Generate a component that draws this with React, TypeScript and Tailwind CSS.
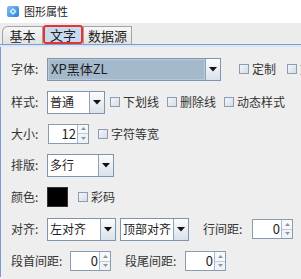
import React from "react"

const font = { fontFamily: '"Noto Sans CJK SC", "Noto Sans", sans-serif' }

function Arrow() {
  return (
    <div className="flex h-full w-[15px] shrink-0 items-center justify-center border-l border-[#8fa3b8] bg-gradient-to-b from-[#fbfcfd] to-[#d9e2eb]">
      <svg width="8" height="5" viewBox="0 0 8 5">
        <path d="M0 0H8L4 4.5Z" fill="#111" />
      </svg>
    </div>
  )
}

function Combo({ text, w, selected = false }: { text: string; w: string; selected?: boolean }) {
  return (
    <div className={`flex h-[23px] shrink-0 items-stretch border border-[#7f95ab] ${w}`}>
      <div
        className={`flex min-w-0 flex-1 items-center overflow-hidden whitespace-nowrap pl-[2px] text-[12px] text-[#1c1c1c] ${
          selected ? "bg-[#a5b9cd] border border-[#b9c9d8] text-[13px]" : "bg-white"
        }`}
      >
        {text}
      </div>
      <Arrow />
    </div>
  )
}

function Check({ label, cls = "" }: { label: string; cls?: string }) {
  return (
    <div className={`flex shrink-0 items-center ${cls}`}>
      <div className="h-[10px] w-[10px] border border-[#8b9db1] bg-gradient-to-br from-[#f4f6f9] to-[#d5dde6]" />
      <span className="ml-[3px] whitespace-nowrap text-[12px] text-[#333]">{label}</span>
    </div>
  )
}

function Spinner({ value, cls = "" }: { value: string; cls?: string }) {
  return (
    <div className={`flex h-[20px] w-[41px] shrink-0 border border-[#8a9cb0] bg-white ${cls}`}>
      <div className="flex flex-1 items-center justify-end pr-[1px] text-[13px] text-[#1c1c1c]">{value}</div>
      <div className="flex w-[11px] flex-col border-l border-[#a9b7c6]">
        <div className="flex flex-1 items-center justify-center border-b border-[#c3ccd6] bg-[#f6f8fa]">
          <svg width="5" height="3" viewBox="0 0 5 3">
            <path d="M0 3H5L2.5 0Z" fill="#8a96a3" />
          </svg>
        </div>
        <div className="flex flex-1 items-center justify-center bg-[#f0f3f6]">
          <svg width="5" height="3" viewBox="0 0 5 3">
            <path d="M0 0H5L2.5 3Z" fill="#8a96a3" />
          </svg>
        </div>
      </div>
    </div>
  )
}

function Label({ text, w = "w-[36px]" }: { text: string; w?: string }) {
  return <span className={`shrink-0 whitespace-nowrap text-[12px] text-[#333] ${w}`}>{text}</span>
}

export default function App() {
  return (
    <div className="h-[279px] w-[301px] overflow-hidden bg-[#eeeeee]" style={font}>
      {/* title */}
      <div className="flex h-[23px] items-center bg-white pl-[7px]">
        <svg width="12" height="11" viewBox="0 0 12 11">
          <defs>
            <linearGradient id="ic" x1="0" y1="0" x2="1" y2="1">
              <stop offset="0" stopColor="#7fc0f5" />
              <stop offset="1" stopColor="#2d7fd9" />
            </linearGradient>
          </defs>
          <rect x="0" y="0" width="12" height="11" rx="2" fill="url(#ic)" />
          <path d="M6 2L9.5 5.5L6 9L2.5 5.5Z" fill="#d9f0ff" />
          <path d="M6 4L7.5 5.5L6 7L4.5 5.5Z" fill="#4a9be6" />
        </svg>
        <span className="ml-[5px] text-[11px] text-[#222]">图形属性</span>
      </div>

      {/* tabs */}
      <div className="flex h-[21px] items-end bg-[#ececec] pl-[2px]">
        <div className="flex h-[18px] w-[41px] items-center justify-center rounded-tl-[6px] border border-b-0 border-[#a3a3a3] bg-gradient-to-b from-[#f7f7f7] to-[#e2e2e2] text-[13px] text-[#222]">
          基本
        </div>
        <div className="flex h-[19px] w-[40px] items-center justify-center rounded-[3px] border-2 border-[#e8322c] bg-[#c7daf0] text-[13px] text-[#222]">
          文字
        </div>
        <div className="flex h-[18px] w-[49px] items-center justify-center border border-b-0 border-[#a3a3a3] bg-gradient-to-b from-[#f7f7f7] to-[#e2e2e2] text-[13px] text-[#222]">
          数据源
        </div>
      </div>
      <div className="h-[1px] bg-[#7b9bd6]" />
      <div className="h-[2px] bg-[#dce7f5]" />

      {/* content */}
      <div className="flex flex-col border-l border-[#7b9bd6] pl-[10px] pt-[5px]">
        <div className="flex h-[34px] items-center">
          <Label text="字体:" />
          <Combo text="XP黑体ZL" w="w-[174px]" selected />
          <Check label="定制" cls="ml-[18px]" />
          <Check label="文字" cls="ml-[11px]" />
        </div>
        <div className="flex h-[32px] items-center">
          <Label text="样式:" />
          <Combo text="普通" w="w-[58px]" />
          <Check label="下划线" cls="ml-[5px]" />
          <Check label="删除线" cls="ml-[8px]" />
          <Check label="动态样式" cls="ml-[8px]" />
        </div>
        <div className="flex h-[31px] items-center">
          <Label text="大小:" w="w-[37px]" />
          <Spinner value="12" />
          <Check label="字符等宽" cls="ml-[9px]" />
        </div>
        <div className="flex h-[32px] items-center">
          <Label text="排版:" />
          <Combo text="多行" w="w-[67px]" />
        </div>
        <div className="flex h-[32px] items-center">
          <Label text="颜色:" />
          <div className="h-[20px] w-[21px] shrink-0 border border-[#333] bg-black" />
          <Check label="彩码" cls="ml-[10px]" />
        </div>
        <div className="flex h-[32px] items-center">
          <Label text="对齐:" />
          <Combo text="左对齐" w="w-[69px]" />
          <div className="ml-[4px] shrink-0">
            <Combo text="顶部对齐" w="w-[69px]" />
          </div>
          <Label text="行间距:" w="w-[49px] ml-[14px]" />
          <Spinner value="0" />
        </div>
        <div className="flex h-[32px] items-center">
          <Label text="段首间距:" w="w-[59px]" />
          <Spinner value="0" />
          <Label text="段尾间距:" w="w-[60px] ml-[14px]" />
          <Spinner value="0" />
        </div>
      </div>
    </div>
  )
}
